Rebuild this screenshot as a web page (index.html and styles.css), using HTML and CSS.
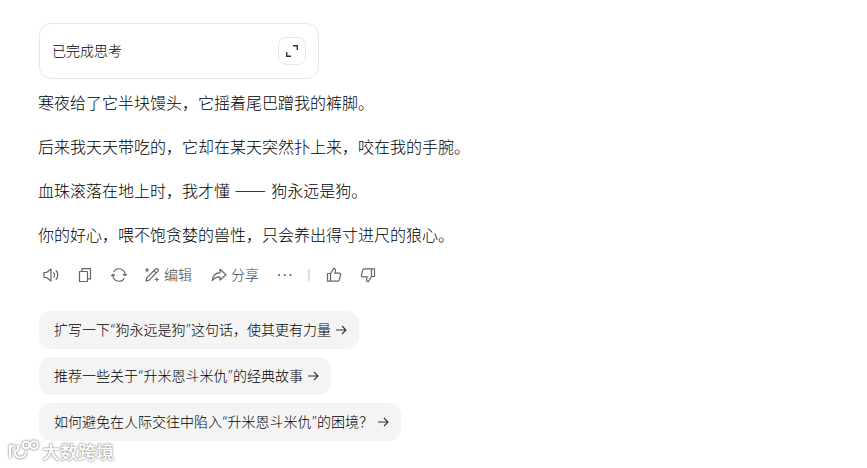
FILE: index.html
```
<!DOCTYPE html>
<html lang="zh-CN">
<head>
<meta charset="utf-8">
<title>对话</title>
<link rel="stylesheet" href="styles.css">
</head>
<body>
<main class="chat">
  <section class="thinking">
    <span class="label">已完成思考</span>
    <button class="expand" aria-label="展开"><svg width="14" height="14" viewBox="0 0 14 14"><path d="M8 1.7h4.3V6M1.7 8v4.3H6"/></svg></button>
  </section>
  <article class="answer">
    <p>寒夜给了它半块馒头，它摇着尾巴蹭我的裤脚。</p>
    <p>后来我天天带吃的，它却在某天突然扑上来，咬在我的手腕。</p>
    <p>血珠滚落在地上时，我才懂 <span class="dash">——</span> 狗永远是狗。</p>
    <p>你的好心，喂不饱贪婪的兽性，只会养出得寸进尺的狼心。</p>
  </article>
  <div class="toolbar">
    <svg class="icon speak" viewBox="0 0 16 16"><path d="M1 5.500h2.500L8 2v12L3.500 10.500H1zM10.500 5.500a3.500 3.500 0 0 1 0 5M12.800 3.300a6.500 6.500 0 0 1 0 9.400"/></svg>
    <svg class="icon copy" viewBox="0 0 16 16"><path d="M2.500 4.500h8v10h-8zM5 4V1.600h8.500v10.200H11"/></svg>
    <svg class="icon refresh" viewBox="0 0 16 16"><path d="M2.600 4.800a6.200 6.200 0 0 1 11.500 3M13.400 11.200A6.200 6.200 0 0 1 1.900 8.200M12 7.200l2.100 1.500 1.700-1.700M.2 9l1.700-1.700L4 8.800"/></svg>
    <span class="action edit"><svg class="icon" viewBox="0 0 16 16"><path d="M2 14l.8-3.200L11.600 2a1.600 1.600 0 0 1 2.300 2.300L5.200 13.200zM9.800 3.800l2.400 2.400M3 1v4M1 3h4M12.800 10.500v4M10.800 12.500h4"/></svg><span class="label">编辑</span></span>
    <span class="action share"><svg class="icon" viewBox="0 0 16 16"><path d="M9 2.300L15 7.800 9 13v-3.100C5.600 9.800 3.400 10.800 1.200 13.700 1.500 9.200 4.300 6.200 9 5.700z"/></svg><span class="label">分享</span></span>
    <svg class="icon more" viewBox="0 0 16 16"><circle cx="2" cy="8" r="1.100"/><circle cx="7.800" cy="8" r="1.100"/><circle cx="13.600" cy="8" r="1.100"/></svg>
    <i class="divider"></i>
    <svg class="icon up" viewBox="0 0 16 16"><path d="M1.500 6.500h3v7.700h-3zM4.500 6.700L7.600 1.400c1.700 0 2.100 1.200 1.800 2.300l-.6 2.400h4.600q1.400.1 1.100 1.500l-1.200 5.300q-.3 1.300-1.500 1.300H4.500"/></svg>
    <svg class="icon down" viewBox="0 0 16 16"><path d="M14.500 9.500h-3V1.800h3zM11.500 9.300L8.400 14.600c-1.700 0-2.100-1.200-1.800-2.300l.6-2.400H2.600Q1.200 9.800 1.500 8.400l1.200-5.300Q3 1.800 4.200 1.800h7.300"/></svg>
  </div>
  <div class="suggestions">
    <button class="chip">扩写一下<q>“</q>狗永远是狗<q>”</q>这句话，使其更有力量<svg class="arrow" viewBox="0 0 12 12"><path d="M1 6h10M7 2l4 4-4 4"/></svg></button>
    <button class="chip">推荐一些关于<q>“</q>升米恩斗米仇<q>”</q>的经典故事<svg class="arrow" viewBox="0 0 12 12"><path d="M1 6h10M7 2l4 4-4 4"/></svg></button>
    <button class="chip">如何避免在人际交往中陷入<q>“</q>升米恩斗米仇<q>”</q>的困境？<svg class="arrow" viewBox="0 0 12 12"><path d="M1 6h10M7 2l4 4-4 4"/></svg></button>
  </div>
</main>
<div class="watermark">
  <svg width="34" height="24" viewBox="0 0 34 24"><path d="M4 5.500v13.500M4 9.500Q5 6.500 8.500 6.500M12 6v4.500L8.500 13q1 5.500 6 5.500 5 0 5.500-5.500"/><circle cx="20" cy="6" r="3.300"/><circle cx="28" cy="6" r="3.800"/></svg>
  <span>大数跨境</span>
</div>
</body>
</html>
```
FILE: styles.css
```
* { box-sizing: border-box; }
body {
  margin: 0;
  height: 468px;
  overflow: hidden;
  background: #fff;
  color: #000;
  font-family: "Noto Sans CJK SC", sans-serif;
  font-weight: 300;
}
.chat { padding: 23px 0 0 39px; }
button { font: inherit; color: inherit; border: 0; }
svg { display: block; flex: none; fill: none; stroke: currentColor; }
.thinking {
  display: flex;
  align-items: center;
  justify-content: space-between;
  width: 280px;
  height: 56px;
  padding: 0 12px;
  border: 1px solid #e8e8e8;
  border-radius: 12px;
  font-size: 14px;
}
.label { padding-bottom: 2px; }
.expand {
  display: grid;
  place-items: center;
  width: 28px;
  height: 28px;
  padding: 0;
  background: #fff;
  border: 1px solid #e8e8e8;
  border-radius: 8px;
}
.expand svg { stroke: #333; stroke-width: 1.4; }
.answer { margin: 10px 0 0 -1px; }
.answer p {
  height: 28px;
  margin: 0 0 16px;
  font: 300 16px/28px "Noto Sans", "Noto Sans CJK SC", sans-serif;
  white-space: nowrap;
}
.answer .dash { font-family: "Noto Sans CJK SC", sans-serif; font-weight: 400; line-height: 1; margin-right: 1px; }
.toolbar {
  display: flex;
  align-items: center;
  height: 20px;
  padding-left: 4px;
  color: #666;
  font-size: 14px;
}
.toolbar .label { color: #444; }
.icon { width: 16px; height: 16px; stroke-width: 1.2; stroke-linejoin: round; }
.copy, .refresh { margin-left: 18px; }
.edit { margin-left: 17px; }
.action { display: flex; align-items: center; gap: 4px; line-height: 20px; }
.share { margin-left: 19px; }
.more { margin-left: 18px; fill: currentColor; stroke: none; }
.divider { width: 2px; height: 12px; margin-left: 15px; background: #ddd; }
.up { margin-left: 16px; }
.down { margin-left: 18px; }
.suggestions {
  display: flex;
  flex-direction: column;
  align-items: flex-start;
  gap: 8px;
  margin-top: 26px;
}
.chip {
  display: flex;
  align-items: center;
  height: 38px;
  padding: 0 12px 2px 15px;
  border-radius: 12px;
  background: #f4f4f4;
  font-size: 14px;
  white-space: nowrap;
}
.chip q { quotes: none; width: 5.5px; font-family: "Open Sans", sans-serif; }
.arrow { width: 12px; height: 12px; margin: 2px 0 0 4px; stroke: #333; stroke-width: 1.1; }
.watermark {
  position: absolute;
  left: 6px;
  bottom: 5px;
  display: flex;
  align-items: center;
  gap: 2px;
  color: #fff;
  font-size: 18px;
  font-weight: 500;
  line-height: 24px;
  text-shadow: 0 0 2px #999, 0 0 2px #aaa, 0 0 1px #aaa;
}
.watermark svg {
  stroke-width: 2;
  filter: drop-shadow(0 0 1px #999) drop-shadow(0 0 0.5px #aaa);
}
```
